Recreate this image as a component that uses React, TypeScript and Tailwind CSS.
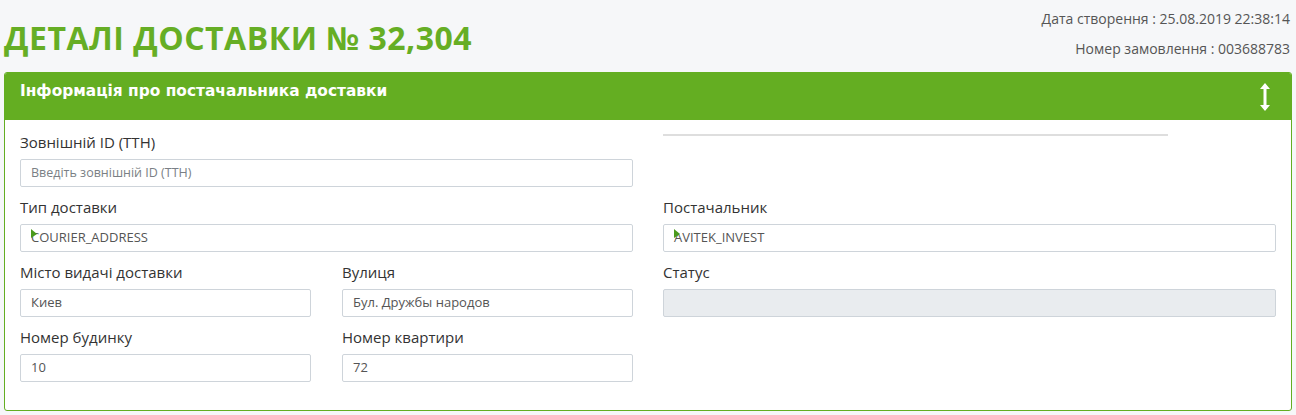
import React from "react";

const font = { fontFamily: "'Open Sans', 'DejaVu Sans', sans-serif" };

function Label({ children }: { children: React.ReactNode }) {
  return <div className="text-[15px] leading-[21px] mb-[6px] text-[#333]">{children}</div>;
}

function Input({
  value,
  placeholder,
  disabled,
  marker,
}: {
  value?: string;
  placeholder?: string;
  disabled?: boolean;
  marker?: boolean;
}) {
  return (
    <div
      className={`relative h-[28px] border border-[#ced4da] rounded-[2px] flex items-center px-[10px] text-[13px] ${
        disabled ? "bg-[#e9ecef]" : "bg-white"
      }`}
    >
      {marker && (
        <svg className="absolute left-[10px] top-[4px]" width="6" height="9" viewBox="0 0 6 9">
          <path d="M0 0 L6 5 L0 9 Z" fill="#4a9a1c" />
        </svg>
      )}
      {value ? (
        <span className="text-[#555]">{value}</span>
      ) : (
        <span className="text-[#7a7f85] text-[12.5px]">{placeholder}</span>
      )}
    </div>
  );
}

function Field({
  label,
  value,
  placeholder,
  disabled,
  marker,
}: {
  label: string;
  value?: string;
  placeholder?: string;
  disabled?: boolean;
  marker?: boolean;
}) {
  return (
    <div className="mb-[10px]">
      <Label>{label}</Label>
      <Input value={value} placeholder={placeholder} disabled={disabled} marker={marker} />
    </div>
  );
}

export default function App() {
  return (
    <div className="min-h-[415px] bg-[#f6f7f9] px-[4px]" style={font}>
      <div className="flex justify-between items-start h-[72px]">
        <h1 className="text-[32px] font-bold text-[#66ae25] leading-[36px] mt-[20px] tracking-[0.5px]">
          ДЕТАЛІ ДОСТАВКИ № 32,304
        </h1>
        <div className="pt-[4px] text-right text-[14px] leading-[30px] text-[#555] pr-[2px]">
          <div>Дата створення : 25.08.2019 22:38:14</div>
          <div>Номер замовлення : 003688783</div>
        </div>
      </div>
      <div className="border border-[#64ae22] rounded-[3px] bg-white overflow-hidden">
        <div className="h-[47px] bg-[#64ae22] flex items-center justify-between pl-[15px] pr-[20px]">
          <div
            className="text-white font-bold text-[15.4px] -mt-[9px]"
            style={{ fontFamily: "'DejaVu Sans', sans-serif" }}
          >
            Інформація про постачальника доставки
          </div>
          <svg width="12" height="30" viewBox="0 0 12 30">
            <path d="M6 1 L11 7 L7.5 7 L7.5 23 L11 23 L6 29 L1 23 L4.5 23 L4.5 7 L1 7 Z" fill="#ffffff" />
          </svg>
        </div>
        <div className="grid grid-cols-2 gap-x-[30px] px-[15px] pt-[12px] pb-[18px]">
          <Field label="Зовнішній ID (ТТН)" placeholder="Введіть зовнішній ID (ТТН)" />
          <div className="pt-[2px]">
            <div className="w-[505px] h-[2px] bg-[#dedede]" />
          </div>
          <Field label="Тип доставки" value="COURIER_ADDRESS" marker />
          <Field label="Постачальник" value="AVITEK_INVEST" marker />
          <div className="grid grid-cols-2 gap-x-[31px]">
            <Field label="Місто видачі доставки" value="Киев" />
            <Field label="Вулиця" value="Бул. Дружбы народов" />
          </div>
          <Field label="Статус" disabled />
          <div className="grid grid-cols-2 gap-x-[31px]">
            <Field label="Номер будинку" value="10" />
            <Field label="Номер квартири" value="72" />
          </div>
          <div />
        </div>
      </div>
    </div>
  );
}
